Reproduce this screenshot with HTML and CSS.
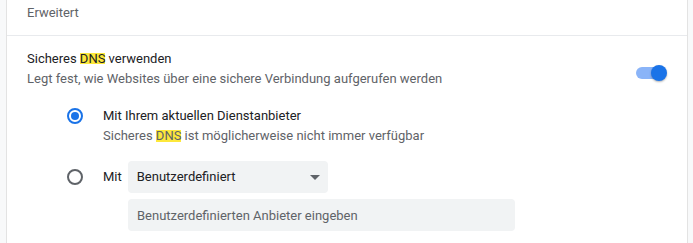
FILE: index.html
```html
<!DOCTYPE html>
<html lang="de">
<head>
    <meta charset="UTF-8">
    <meta name="viewport" content="width=device-width, initial-scale=1.0">
    <title>Sicherheit - Erweitert</title>
    <link rel="stylesheet" href="styles.css">
</head>
<body>
<div class="card">
    <div class="section-header">Erweitert</div>

    <div class="setting-row">
        <div class="setting-text">
            <div class="label">Sicheres <span class="hit">DNS</span> verwenden</div>
            <div class="sub">Legt fest, wie Websites über eine sichere Verbindung aufgerufen werden</div>
        </div>
        <div class="toggle on">
            <span class="track"></span>
            <span class="knob"></span>
        </div>
    </div>

    <div class="radio-group">
        <div class="option">
            <span class="radio checked"></span>
            <div class="option-text">
                <div class="label">Mit Ihrem aktuellen Dienstanbieter</div>
                <div class="sub">Sicheres <span class="hit small">DNS</span> ist möglicherweise nicht immer verfügbar</div>
            </div>
        </div>

        <div class="option custom">
            <span class="radio"></span>
            <div class="custom-fields">
                <div class="custom-row">
                    <span class="label">Mit</span>
                    <div class="dropdown">
                        <span>Benutzerdefiniert</span>
                        <svg width="10" height="5" viewBox="0 0 10 5"><path d="M0 0h10L5 5z" fill="#5f6368"/></svg>
                    </div>
                </div>
                <input class="text-input" type="text" placeholder="Benutzerdefinierten Anbieter eingeben">
            </div>
        </div>
    </div>
</div>
</body>
</html>
```

FILE: styles.css
```css
body {
    margin: 0;
    padding: 0 5px 0 6px;
    background-color: #f8f9fa;
    font-family: Roboto, "Liberation Sans", Arial, sans-serif;
    font-size: 13px;
    line-height: 20px;
    color: #202124;
}
.card {
    background: white;
    border-left: 1px solid #e3e3e3;
    border-right: 1px solid #e3e3e3;
    height: 243px;
    box-sizing: border-box;
}
.section-header {
    padding: 3px 20px 12px;
    color: #5f6368;
    border-bottom: 1px solid #e8eaed;
}
.setting-row {
    display: flex;
    align-items: center;
    justify-content: space-between;
    padding: 13px 20px 0;
}
.sub {
    color: #5f6368;
}
.hit {
    display: inline-block;
    line-height: 11px;
    background-color: #fde83b;
}
.hit.small {
    line-height: 12px;
}
.toggle {
    position: relative;
    width: 31px;
    height: 16px;
    margin-top: 7px;
}
.track {
    position: absolute;
    left: 0;
    top: 2px;
    width: 26px;
    height: 12px;
    border-radius: 6px;
    background-color: #8ab4f8;
}
.knob {
    position: absolute;
    right: 0;
    top: 0;
    width: 16px;
    height: 16px;
    border-radius: 50%;
    background-color: #1a73e8;
    box-shadow: 0 1px 2px rgba(0, 0, 0, 0.3);
}
.radio-group {
    padding: 17px 20px 0 60px;
}
.option {
    display: flex;
    gap: 20px;
}
.radio {
    flex: none;
    width: 16px;
    height: 16px;
    margin-top: 2px;
    box-sizing: border-box;
    border: 2px solid #5f6368;
    border-radius: 50%;
    position: relative;
}
.radio.checked {
    border-color: #1a73e8;
}
.radio.checked::after {
    content: "";
    position: absolute;
    left: 2px;
    top: 2px;
    width: 8px;
    height: 8px;
    border-radius: 50%;
    background-color: #1a73e8;
}
.option.custom {
    margin-top: 15px;
}
.option.custom .radio {
    margin-top: 8px;
}
.custom-fields {
    display: flex;
    flex-direction: column;
    gap: 6px;
}
.custom-row {
    display: flex;
    align-items: center;
    gap: 6px;
}
.dropdown {
    width: 200px;
    height: 32px;
    box-sizing: border-box;
    padding: 0 8px 0 9px;
    display: flex;
    align-items: center;
    justify-content: space-between;
    background-color: #f1f3f4;
    border-radius: 4px;
}
.text-input {
    width: 387px;
    height: 32px;
    margin-left: 25px;
    box-sizing: border-box;
    padding: 0 9px;
    border: none;
    border-radius: 4px;
    background-color: #f1f3f4;
    font-family: inherit;
    font-size: 13px;
    color: #202124;
    outline: none;
}
.text-input::placeholder {
    color: #5f6368;
}
```
